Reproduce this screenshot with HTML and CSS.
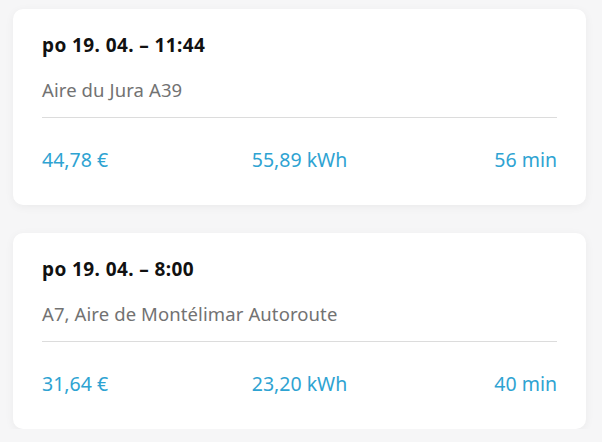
FILE: index.html
```html
<!DOCTYPE html>
<html>
<head>
<meta charset="utf-8">
<link rel="stylesheet" href="styles.css">
</head>
<body>
<div class="list">
  <div class="card">
    <div class="title">po 19. 04. – 11:44</div>
    <div class="place">Aire du Jura A39</div>
    <div class="divider"></div>
    <div class="stats">
      <span class="stat left">44,78 €</span>
      <span class="stat mid">55,89 kWh</span>
      <span class="stat right">56 min</span>
    </div>
  </div>
  <div class="card">
    <div class="title">po 19. 04. – 8:00</div>
    <div class="place">A7, Aire de Montélimar Autoroute</div>
    <div class="divider"></div>
    <div class="stats">
      <span class="stat left">31,64 €</span>
      <span class="stat mid">23,20 kWh</span>
      <span class="stat right">40 min</span>
    </div>
  </div>
</div>
</body>
</html>
```
FILE: styles.css
```css
html, body {
  margin: 0;
  padding: 0;
  background: #f6f6f7;
  font-family: "Noto Sans", "Open Sans", sans-serif;
}
.list {
  display: flex;
  flex-direction: column;
  gap: 28px;
  padding: 9px 16px 0 13px;
}
.card {
  background: #fff;
  border-radius: 10px;
  box-shadow: 0 2px 10px rgba(0, 0, 0, 0.05);
  padding: 25px 29px 0;
  height: 196px;
  box-sizing: border-box;
}
.title {
  font-size: 19px;
  font-weight: 700;
  color: #111;
  line-height: 22px;
  letter-spacing: 0.4px;
}
.place {
  margin-top: 23px;
  font-size: 18.5px;
  color: #727272;
  line-height: 22px;
  letter-spacing: 0.1px;
}
.divider {
  margin-top: 16px;
  height: 1px;
  background: #dcdcdc;
}
.stats {
  display: grid;
  grid-template-columns: 1fr auto 1fr;
  margin-top: 31px;
  font-size: 19.5px;
  line-height: 22px;
  color: #2ea3d2;
}
.left { justify-self: start; }
.mid { justify-self: center; }
.right { justify-self: end; }
```
